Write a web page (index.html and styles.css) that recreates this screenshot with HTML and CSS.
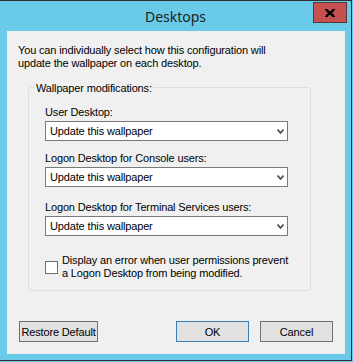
FILE: index.html
```html
<!DOCTYPE html>
<html lang="en">
<head>
<meta charset="UTF-8">
<meta name="viewport" content="width=device-width, initial-scale=1.0">
<title>Desktops</title>
<link rel="stylesheet" href="styles.css">
</head>
<body>

<div class="window">
  <div class="titlebar">
    <span class="title">Desktops</span>
    <button class="close" title="Close">
      <svg width="10" height="8" viewBox="0 0 10 8">
        <path d="M1.2 0.8 L8.8 7.2 M8.8 0.8 L1.2 7.2" stroke="#000" stroke-width="2.3" fill="none"/>
        <path d="M0 0.5 H3 M7 0.5 H10 M0 7.5 H3 M7 7.5 H10" stroke="#000" stroke-width="1" fill="none"/>
      </svg>
    </button>
  </div>

  <div class="client">
    <p class="intro">You can individually select how this configuration will<br>update the wallpaper on each desktop.</p>

    <fieldset class="group">
      <legend>Wallpaper modifications:</legend>
      <div class="group-body">
        <div class="field">
          <div class="field-label">User Desktop:</div>
          <div class="combo">
            <span>Update this wallpaper</span>
            <svg class="chevron" width="7" height="5" viewBox="0 0 7 5"><path d="M0.6 0.6 L3.5 4 L6.4 0.6" stroke="#4a4a4a" stroke-width="1.6" fill="none"/></svg>
          </div>
        </div>
        <div class="field">
          <div class="field-label">Logon Desktop for Console users:</div>
          <div class="combo">
            <span>Update this wallpaper</span>
            <svg class="chevron" width="7" height="5" viewBox="0 0 7 5"><path d="M0.6 0.6 L3.5 4 L6.4 0.6" stroke="#4a4a4a" stroke-width="1.6" fill="none"/></svg>
          </div>
        </div>
        <div class="field field-wide">
          <div class="field-label">Logon Desktop for Terminal Services users:</div>
          <div class="combo">
            <span>Update this wallpaper</span>
            <svg class="chevron" width="7" height="5" viewBox="0 0 7 5"><path d="M0.6 0.6 L3.5 4 L6.4 0.6" stroke="#4a4a4a" stroke-width="1.6" fill="none"/></svg>
          </div>
        </div>
        <label class="check-row">
          <span class="check-box"></span>
          <span>Display an error when user permissions prevent<br>a Logon Desktop from being modified.</span>
        </label>
      </div>
    </fieldset>

    <div class="buttons">
      <button class="btn btn-restore">Restore Default</button>
      <div class="btn-group">
        <button class="btn btn-default">OK</button>
        <button class="btn">Cancel</button>
      </div>
    </div>
  </div>
</div>

</body>
</html>
```

FILE: styles.css
```css
body {
  margin: 0;
  background-color: #69cae9;
  font-family: "Liberation Sans", Arial, sans-serif;
  font-size: 11px;
  line-height: 13px;
  letter-spacing: -0.15px;
  color: #000;
}

.window {
  width: 352px;
  height: 361px;
  box-sizing: border-box;
  background-color: #69cae9;
  border-top: 1px solid #2e2e2e;
  border-right: 1px solid #2e2e2e;
  border-bottom: 1px solid #2e2e2e;
}

.titlebar {
  position: relative;
  height: 30px;
  padding-top: 6px;
  box-sizing: border-box;
  text-align: center;
}

.title {
  font-family: "Noto Sans", sans-serif;
  font-size: 14px;
  line-height: 19px;
  letter-spacing: 0;
  color: #1b1f22;
}

.close {
  position: absolute;
  top: 1px;
  right: 4px;
  width: 34px;
  height: 21px;
  box-sizing: border-box;
  padding: 0;
  border: 1px solid #4e3a3a;
  background-color: #c75050;
  display: flex;
  align-items: center;
  justify-content: center;
}

.close svg {
  display: block;
}

.client {
  margin-left: 7px;
  width: 338px;
  height: 323px;
  box-sizing: border-box;
  padding: 13px 12px 0 11px;
  background-color: #f0f0f0;
}

.intro {
  margin: 0;
}

.group {
  margin: 10px 0 0 10px;
  width: 283px;
  min-width: 0;
  box-sizing: border-box;
  padding: 11px 0 10px 6px;
  border: 1px solid #d5dfe5;
  border-radius: 3px;
}

.group legend {
  margin: 0;
  padding: 2px 1px 0;
  line-height: 13px;
}

.group-body {
  padding-left: 10px;
}

.field + .field {
  margin-top: 11px;
}

.field.field-wide {
  margin-top: 14px;
}

.combo {
  margin-top: 2px;
  width: 243px;
  height: 20px;
  box-sizing: border-box;
  border: 1px solid #7a7a7a;
  background-color: #fff;
  padding: 0 3px 0 4px;
  display: flex;
  align-items: center;
  justify-content: space-between;
}

.chevron {
  display: block;
}

.check-row {
  margin-top: 18px;
  display: flex;
  align-items: center;
}

.check-box {
  width: 13px;
  height: 13px;
  box-sizing: border-box;
  border: 1px solid #6d6d6d;
  background-color: #fff;
  margin-right: 4px;
  flex: none;
}

.buttons {
  margin-top: 30px;
  margin-left: 1px;
  display: flex;
  justify-content: space-between;
}

.btn-group {
  display: flex;
  gap: 11px;
}

.btn {
  width: 73px;
  height: 21px;
  box-sizing: border-box;
  padding: 0;
  border: 1px solid #707070;
  background-color: #e1e1e1;
  font-family: inherit;
  font-size: 11px;
  letter-spacing: -0.15px;
  color: #000;
}

.btn-restore {
  width: 79px;
}

.btn-default {
  border-color: #3c7fb1;
}
```
